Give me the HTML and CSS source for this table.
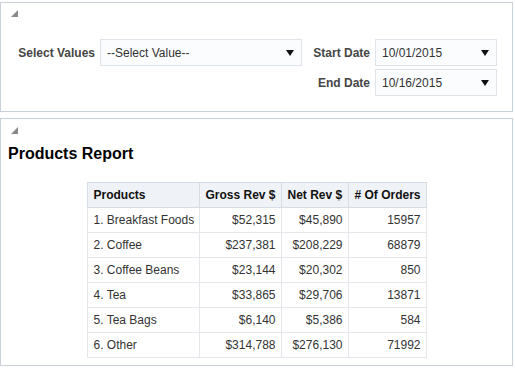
FILE: index.html
```html
<!DOCTYPE html>
<html>
<head>
<meta charset="utf-8">
<link rel="stylesheet" href="styles.css">
</head>
<body>
<div class="page">
  <section class="panel panel-filters">
    <svg class="collapse" width="7" height="7" viewBox="0 0 7 7"><polygon points="7,0 7,7 0,7" fill="#8a8a8a"/></svg>
    <div class="form">
      <label class="lbl">Select Values</label>
      <div class="field"><span>--Select Value--</span><i class="arrow"></i></div>
      <label class="lbl">Start Date</label>
      <div class="field"><span>10/01/2015</span><i class="arrow"></i></div>
      <span></span><span></span>
      <label class="lbl">End Date</label>
      <div class="field"><span>10/16/2015</span><i class="arrow"></i></div>
    </div>
  </section>
  <section class="panel panel-report">
    <svg class="collapse" width="7" height="7" viewBox="0 0 7 7"><polygon points="7,0 7,7 0,7" fill="#8a8a8a"/></svg>
    <h2 class="title">Products Report</h2>
    <table class="report">
      <colgroup>
        <col class="c1"><col class="c2"><col class="c3"><col class="c4">
      </colgroup>
      <thead>
        <tr><th>Products</th><th>Gross Rev $</th><th>Net Rev $</th><th># Of Orders</th></tr>
      </thead>
      <tbody>
        <tr><td>1. Breakfast Foods</td><td class="num">$52,315</td><td class="num">$45,890</td><td class="num">15957</td></tr>
        <tr><td>2. Coffee</td><td class="num">$237,381</td><td class="num">$208,229</td><td class="num">68879</td></tr>
        <tr><td>3. Coffee Beans</td><td class="num">$23,144</td><td class="num">$20,302</td><td class="num">850</td></tr>
        <tr><td>4. Tea</td><td class="num">$33,865</td><td class="num">$29,706</td><td class="num">13871</td></tr>
        <tr><td>5. Tea Bags</td><td class="num">$6,140</td><td class="num">$5,386</td><td class="num">584</td></tr>
        <tr><td>6. Other</td><td class="num">$314,788</td><td class="num">$276,130</td><td class="num">71992</td></tr>
      </tbody>
    </table>
  </section>
</div>
</body>
</html>
```
FILE: styles.css
```css
html, body {
  margin: 0;
  padding: 0;
  background: #ffffff;
  font-family: "Liberation Sans", Arial, sans-serif;
  font-size: 12px;
  color: #333333;
}

.page {
  padding-top: 2px;
  width: 513px;
}

.panel {
  border: 1px solid #c9d1da;
  background: #ffffff;
}

.panel-filters {
  padding: 7px 0 15px 0;
}

.panel-report {
  margin-top: 6px;
  padding: 8px 0 7px 0;
}

.collapse {
  display: block;
  margin-left: 10px;
}

.form {
  margin-top: 22px;
  margin-left: 17px;
  display: grid;
  grid-template-columns: 82px 202px 73px 122px;
  grid-auto-rows: 27px;
  row-gap: 3px;
}

.lbl {
  font-weight: bold;
  color: #454545;
  text-align: right;
  padding-right: 5px;
  align-self: center;
  white-space: nowrap;
}

.field {
  box-sizing: border-box;
  border: 1px solid #dfe4ea;
  background: #fbfcfd;
  display: flex;
  align-items: center;
  justify-content: space-between;
  padding: 0 7px 0 6px;
  color: #333333;
}

.arrow {
  width: 0;
  height: 0;
  border-left: 4.5px solid transparent;
  border-right: 4.5px solid transparent;
  border-top: 6px solid #111111;
  margin-top: 1px;
}

.title {
  margin: 11px 0 0 7px;
  font-size: 16px;
  line-height: 18px;
  font-weight: bold;
  color: #000000;
}

.report {
  margin: 19px auto 0 auto;
  border-collapse: collapse;
  border: 1px solid #d5dce3;
  table-layout: fixed;
  width: 339px;
}

.report th,
.report td {
  height: 25px;
  padding: 0 5px 0 6px;
  box-sizing: border-box;
  white-space: nowrap;
  overflow: hidden;
  border: 1px solid #e3e7eb;
}

.report th {
  background: #eff2f6;
  color: #111111;
  font-weight: bold;
  text-align: left;
  padding: 0 4px 0 6px;
  border-color: #d5dce3;
}

.report td {
  color: #333333;
}

.report .num {
  text-align: right;
}

.c1 { width: 112px; }
.c2 { width: 82px; }
.c3 { width: 67px; }
.c4 { width: 78px; }
```
